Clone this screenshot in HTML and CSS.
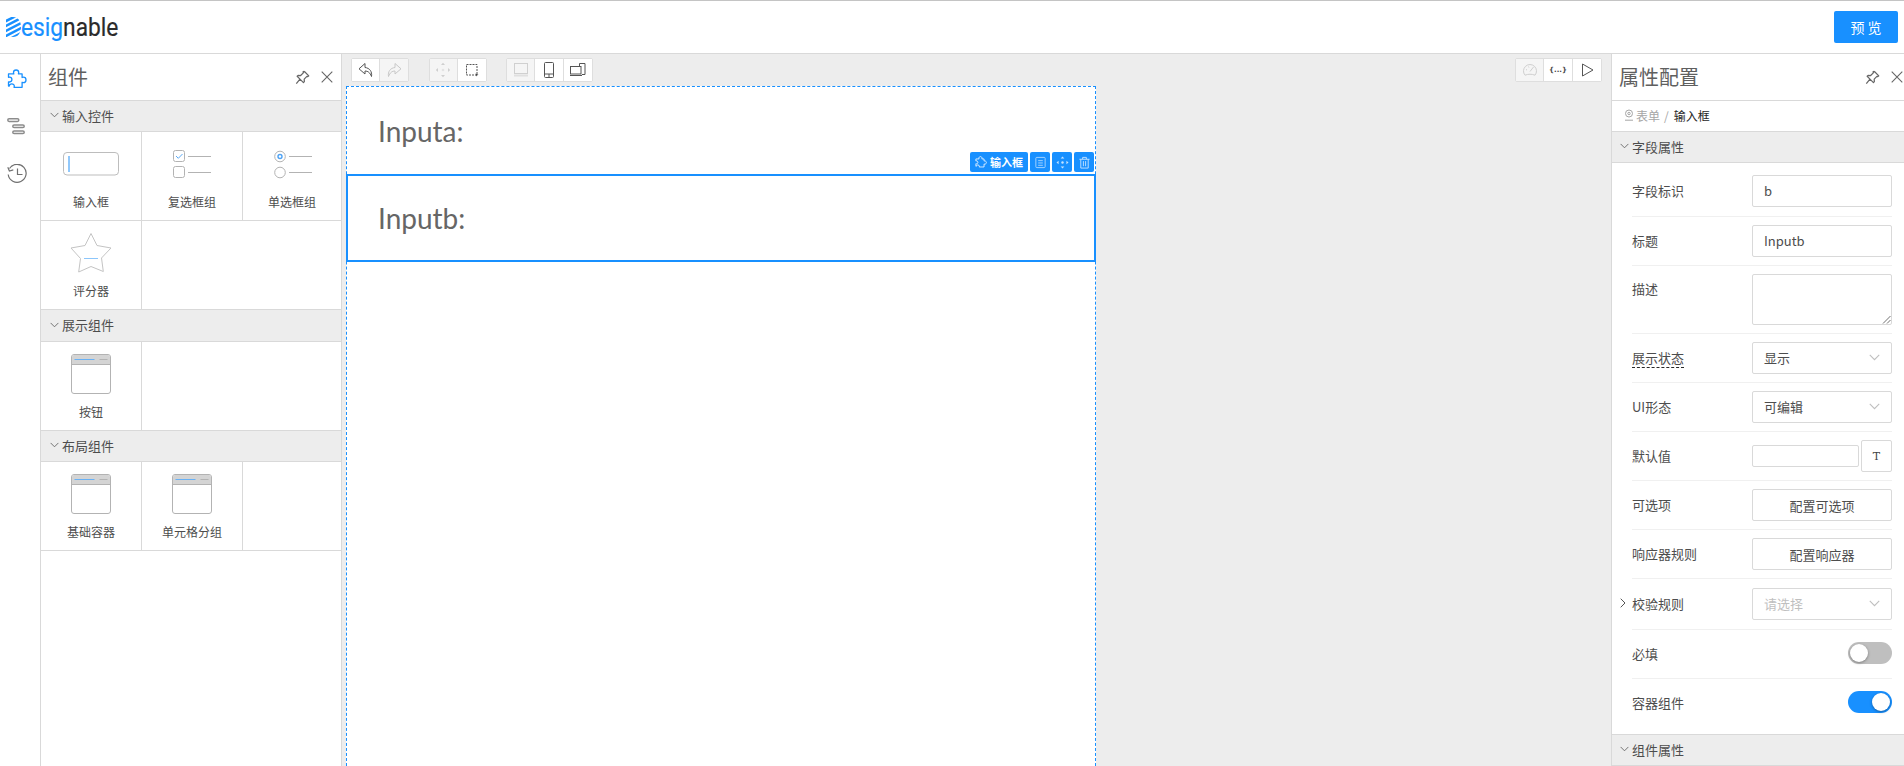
FILE: index.html
```html
<!DOCTYPE html>
<html lang="zh-CN">
<head>
<meta charset="utf-8">
<title>Designable</title>
<link rel="stylesheet" href="styles.css">
</head>
<body>
<svg class="sprite" xmlns="http://www.w3.org/2000/svg">
  <symbol id="puzzle" viewBox="0 0 20 20"><path d="M6.500 3.600c0-1.600 1.200-2.600 2.600-2.600s2.600 1 2.600 2.600c0 .5-.1.9-.3 1.300h3.700v3.600c.4-.2.8-.3 1.200-.3 1.500 0 2.700 1.200 2.700 2.700s-1.200 2.700-2.700 2.700c-.4 0-.8-.1-1.200-.3v5H7c.2-.4.3-.8.3-1.200 0-1.300-1.100-2.200-2.500-2.200s-2.500.9-2.500 2.200H1.500V12.800c.4.2.6.2 1 .2 1.300 0 2.400-1 2.400-2.400S3.800 8.200 2.500 8.200c-.4 0-.7.1-1 .2V4.900h5.300c-.2-.4-.3-.8-.3-1.300z" fill="none" stroke="currentColor" stroke-width="1.300" stroke-linejoin="round"/></symbol>
  <symbol id="pin" viewBox="0 0 16 16"><path d="M9.800 1.300l4.900 4.900-1 .9-1-.3-2.900 2.900.2 2.700-1 1L5.300 9.700 1.400 14.600M5.300 9.700 2.300 6.700l1-1 2.700.2 2.900-2.900-.3-1 1.200-.7" fill="none" stroke="currentColor" stroke-width="1.300" stroke-linejoin="round"/></symbol>
  <symbol id="close" viewBox="0 0 12 12"><path d="M.7.700l10.600 10.600M11.300.700.700 11.300" fill="none" stroke="currentColor" stroke-width="1.100"/></symbol>
  <symbol id="chev" viewBox="0 0 10 6"><path d="M.7.700 5 5l4.300-4.300" fill="none" stroke="currentColor" stroke-width="1"/></symbol>
  <symbol id="window" viewBox="0 0 40 40">
    <rect x=".5" y=".5" width="39" height="39" rx="2.500" fill="#fff" stroke="#b3b3b3"/>
    <path d="M1 3a2 2 0 0 1 2-2h34a2 2 0 0 1 2 2v7.500H1z" fill="#d4d4d4"/>
    <path d="M.5 10.500h39" stroke="#b3b3b3"/>
    <path d="M3.500 5.500h20" stroke="#69b1f5"/>
    <path d="M28.500 5.500h8" stroke="#b3b3b3"/>
  </symbol>
</svg>
<header class="topbar">
  <div class="logo">
    <svg class="logo-mark" viewBox="0 0 15 20" width="15" height="20"><defs><clipPath id="dclip"><path d="M0 0h7c5 0 8 4 8 10s-3 10-8 10H0z"/></clipPath></defs><g clip-path="url(#dclip)" fill="none" stroke="#1890ff" stroke-width="2.500"><path d="M-2 5 12-2M-2 10 17 0M-2 15 17 5M-2 20 17 10M2 23 17 15"/></g></svg>
    <span class="logo-word"><span class="logo-blue">esig</span><span class="logo-dark">nable</span></span>
  </div>
  <button class="primary">预 览</button>
</header>
<main class="workspace">
  <nav class="rail">
    <svg class="rail-icon active" width="20" height="20"><use href="#puzzle"/></svg>
    <svg class="rail-icon" viewBox="0 0 18 17" width="18" height="17"><g fill="none" stroke="#8c8c8c" stroke-width="1.500"><rect x=".8" y=".8" width="11" height="2.600" rx="1.300"/><rect x="5.800" y="7" width="11.400" height="2.600" rx="1.300"/><rect x="5.800" y="13" width="11.400" height="2.600" rx="1.300"/></g></svg>
    <svg class="rail-icon" viewBox="0 0 20 20" width="20" height="20"><g fill="none" stroke="#707070" stroke-width="1.200"><path d="M2.500 4.500A9 9 0 1 1 1.200 10.500"/><path d="M.8 3.200 2.400 7l3.900-1.100"/><path d="M10.500 4.500v6h5"/></g></svg>
  </nav>

  <aside class="panel left">
    <div class="panel-head"><span class="panel-title">组件</span><span class="head-tools"><svg class="i-pin"><use href="#pin"/></svg><svg class="i-close"><use href="#close"/></svg></span></div>

    <div class="sec-head"><svg class="chev"><use href="#chev"/></svg>输入控件</div>
    <div class="cells">
      <div class="cell"><svg class="cell-icon" viewBox="0 0 60 40"><rect x="2.500" y="8.500" width="55" height="22.500" rx="3.500" fill="#fff" stroke="#bdbdbd"/><path d="M8 12v16" stroke="#91c8fb" stroke-width="2"/></svg><span>输入框</span></div>
      <div class="cell"><svg class="cell-icon" viewBox="0 0 60 40"><g fill="none" stroke="#b3b3b3"><rect x="11.500" y="6.500" width="11" height="11" rx="2"/><rect x="11.500" y="22.500" width="11" height="11" rx="2"/><path d="M26 12.500h23M26 28.500h23"/></g><path d="M14 12l2.300 2.300L20.500 10" fill="none" stroke="#5aa9f5"/></svg><span>复选框组</span></div>
      <div class="cell"><svg class="cell-icon" viewBox="0 0 60 40"><g fill="none" stroke="#b3b3b3"><circle cx="18" cy="12.500" r="5.300"/><circle cx="18" cy="28.500" r="5.300"/><path d="M27 12.500h23M27 28.500h23"/></g><circle cx="18" cy="12.500" r="2" fill="none" stroke="#4ea3f5" stroke-width="1.400"/></svg><span>单选框组</span></div>
      <div class="cell"><svg class="cell-icon star" viewBox="0 0 60 40"><path d="M30 .5 36 12.500l14 2.500-9.500 10 1.800 13.500L30 33.500l-12.300 5.500 1.800-13.500L10 15l14-2.500z" fill="#fff" stroke="#c4c4c4" stroke-linejoin="round"/><path d="M23 25.500h14" stroke="#8cc6fb"/></svg><span>评分器</span></div>
      <div class="cell"></div>
      <div class="cell"></div>
    </div>

    <div class="sec-head tall"><svg class="chev"><use href="#chev"/></svg>展示组件</div>
    <div class="cells">
      <div class="cell"><svg class="cell-icon" viewBox="-10 0 60 40"><use href="#window" width="40" height="40"/></svg><span>按钮</span></div>
      <div class="cell"></div>
      <div class="cell"></div>
    </div>

    <div class="sec-head"><svg class="chev"><use href="#chev"/></svg>布局组件</div>
    <div class="cells">
      <div class="cell"><svg class="cell-icon" viewBox="-10 0 60 40"><use href="#window" width="40" height="40"/></svg><span>基础容器</span></div>
      <div class="cell"><svg class="cell-icon" viewBox="-10 0 60 40"><use href="#window" width="40" height="40"/></svg><span>单元格分组</span></div>
      <div class="cell"></div>
    </div>
  </aside>

  <section class="canvas">
    <div class="toolbar">
      <div class="tool-groups">
        <div class="btn-group">
          <button class="tool"><svg viewBox="0 0 16 16" width="16" height="16"><path d="M7 1.500 1 6.800l6 5.200V9c3 .1 5 1.500 6.500 5.500.8-4.800-1.800-8.500-6.500-9z" fill="none" stroke="#555" stroke-linejoin="round"/></svg></button>
          <button class="tool off"><svg viewBox="0 0 16 16" width="16" height="16"><path d="M9 1.500l6 5.300-6 5.200V9c-3 .1-5 1.500-6.500 5.500C1.700 9.700 4.300 6 9 5.500z" fill="none" stroke="#c8c8c8" stroke-linejoin="round"/></svg></button>
        </div>
        <div class="btn-group">
          <button class="tool off"><svg viewBox="0 0 16 16" width="16" height="16"><g fill="#cfcfcf"><path d="M8 .8 10 3H6zM8 15.200 6 13h4zM.8 8 3 6v4zM15.200 8 13 10V6z"/></g><circle cx="8" cy="8" r="1.300" fill="#e3e3e3"/></svg></button>
          <button class="tool"><svg viewBox="0 0 14 14" width="14" height="14"><rect x="1.500" y="1.500" width="10.500" height="10.500" fill="none" stroke="#555" stroke-dasharray="2 1"/><path d="M10.500 10.500l3 1.200-1.200.6-.6 1.200z" fill="#444"/></svg></button>
        </div>
        <div class="btn-group">
          <button class="tool off"><svg viewBox="0 0 16 16" width="16" height="16"><rect x="1.500" y="1.500" width="13" height="10" fill="none" stroke="#d0d0d0"/><rect x="1" y="12.500" width="14" height="2" fill="#e0e0e0"/></svg></button>
          <button class="tool"><svg viewBox="0 0 16 16" width="16" height="16"><g fill="none" stroke="#555"><rect x="3.500" y=".5" width="9" height="15" rx="1"/><path d="M3.500 12h9M8 12v3.500"/></g></svg></button>
          <button class="tool"><svg viewBox="0 0 16 16" width="16" height="16"><g fill="none" stroke="#555"><path d="M9.500 4V1.500h5.500v11h-3"/><rect x=".5" y="4.500" width="10.500" height="7.500"/><path d="M0 13.500h12"/></g></svg></button>
        </div>
      </div>
      <div class="btn-group">
        <button class="tool off"><svg viewBox="0 0 16 16" width="16" height="16"><g fill="none" stroke="#cfcfcf"><path d="M3 13.200a6.500 6.500 0 1 1 10 0c-3-1.300-7-1.300-10 0z"/><path d="M8 9.500l3.500-4.500M4 7.500l1 .5M6.500 4.500l.4 1"/></g></svg></button>
        <button class="tool code">{...}</button>
        <button class="tool"><svg viewBox="0 0 16 16" width="16" height="16"><path d="M3.500 2v12l10.500-6z" fill="none" stroke="#555" stroke-linejoin="round"/></svg></button>
      </div>
    </div>
    <div class="form-sheet">
      <div class="field-item first">Inputa:</div>
      <div class="field-item selected">Inputb:
        <div class="field-actions">
          <span class="action wide"><svg width="12" height="12"><use href="#puzzle"/></svg>输入框</span>
          <span class="action"><svg viewBox="0 0 14 14" width="13" height="13"><g fill="none" stroke="#a9d5ff"><rect x="2" y="1.500" width="10" height="11" rx="1"/><path d="M4.500 5h5M4.500 7.500h5M4.500 10h5"/></g></svg></span>
          <span class="action"><svg viewBox="0 0 14 14" width="13" height="13"><g fill="#c6e3ff"><path d="M7 .5 9 2.800H5zM7 13.500 5 11.200h4zM.5 7 2.800 5v4zM13.500 7 11.200 9V5z"/><circle cx="7" cy="7" r="1.300"/></g></svg></span>
          <span class="action"><svg viewBox="0 0 14 14" width="13" height="13"><g fill="none" stroke="#c6e3ff"><path d="M1.500 3.500h11M5 3.500V1.500h4v2M3 3.500v9.500h8V3.500M5.800 5.500V11M8.200 5.500V11"/></g></svg></span>
        </div>
      </div>
    </div>
  </section>

  <aside class="panel right">
    <div class="panel-head"><span class="panel-title">属性配置</span><span class="head-tools"><svg class="i-pin"><use href="#pin"/></svg><svg class="i-close"><use href="#close"/></svg></span></div>
    <div class="crumb"><svg viewBox="0 0 10 12" width="10" height="12"><g fill="none" stroke="#a6a6a6"><circle cx="5" cy="4.500" r="3.500"/><circle cx="5" cy="4.500" r="1.200"/><path d="M1 11.200h8"/></g></svg><span class="crumb-dim">表单</span><span class="crumb-sep">/</span><span>输入框</span></div>
    <div class="sec-head prop"><svg class="chev"><use href="#chev"/></svg>字段属性</div>
    <div class="props">
      <div class="prop-row lead"><label>字段标识</label><div class="input">b</div></div>
      <div class="prop-row"><label>标题</label><div class="input">Inputb</div></div>
      <div class="prop-row top"><label>描述</label><div class="input area"><svg viewBox="0 0 9 9" width="9" height="9"><path d="M8.500 1 1 8.500M8.500 5 5 8.500" stroke="#707070" fill="none"/></svg></div></div>
      <div class="prop-row"><label class="tip">展示状态</label><div class="input select">显示<svg class="sel-chev"><use href="#chev"/></svg></div></div>
      <div class="prop-row"><label>UI形态</label><div class="input select">可编辑<svg class="sel-chev"><use href="#chev"/></svg></div></div>
      <div class="prop-row"><label>默认值</label><div class="poly"><div class="input mini"></div><button class="btn-t">T</button></div></div>
      <div class="prop-row"><label>可选项</label><button class="btn">配置可选项</button></div>
      <div class="prop-row"><label>响应器规则</label><button class="btn">配置响应器</button></div>
      <div class="prop-row rules"><svg class="expand"><use href="#chev"/></svg><label>校验规则</label><div class="input select placeholder">请选择<svg class="sel-chev"><use href="#chev"/></svg></div></div>
      <div class="prop-row"><label>必填</label><span class="switch"></span></div>
      <div class="prop-row last"><label>容器组件</label><span class="switch on"></span></div>
    </div>
    <div class="sec-head prop bottom"><svg class="chev"><use href="#chev"/></svg>组件属性</div>
  </aside>
</main>
</body>
</html>
```
FILE: styles.css
```css
* { box-sizing: border-box; }
html, body { margin: 0; height: 100%; overflow: hidden; }
body { font-family: "Noto Sans CJK SC", sans-serif; font-size: 13px; color: #4d4d4d; background: #fff; height: 766px; display: flex; flex-direction: column; }
button { font-family: inherit; }
.sprite { display: none; }

.topbar { height: 54px; flex: none; border-top: 1px solid #c4c4c4; border-bottom: 1px solid #d9d9d9; display: flex; align-items: center; justify-content: space-between; padding: 0 6px; }
.logo { display: flex; align-items: center; width: 112px; }
.logo-mark { flex: none; margin-right: 0; }
.logo-word { font-family: Roboto, sans-serif; font-size: 26px; line-height: 30px; transform: scaleX(.875); transform-origin: left center; white-space: nowrap; -webkit-text-stroke: .2px currentColor; }
.logo-blue { color: #1890ff; }
.logo-dark { color: #2b2b2b; }
.primary { width: 64px; height: 32px; border: 0; border-radius: 2px; background: #1890ff; color: #fff; font-size: 14px; padding: 0; }

.workspace { flex: 1; min-height: 0; display: flex; }
.rail { width: 41px; flex: none; border-right: 1px solid #d9d9d9; display: flex; flex-direction: column; align-items: flex-start; padding: 15px 0 0 7px; gap: 29px; }
.rail-icon { color: #8c8c8c; display: block; }
.rail-icon.active { color: #1890ff; }

.panel { flex: none; background: #fff; display: flex; flex-direction: column; overflow: hidden; }
.panel.left { width: 301px; border-right: 1px solid #d9d9d9; }
.panel.right { width: 293px; border-left: 1px solid #d9d9d9; }
.panel-head { height: 47px; flex: none; border-bottom: 1px solid #d9d9d9; display: flex; align-items: center; justify-content: space-between; padding: 0 8px 0 7px; }
.right .panel-head { padding-right: 1px; }
.panel-title { font-size: 20px; color: #5f5f5f; line-height: 28px; }
.head-tools { display: flex; align-items: center; gap: 11px; color: #666; }
.i-pin { width: 15px; height: 15px; }
.i-close { width: 12px; height: 12px; }

.sec-head { height: 31px; flex: none; background: #ededed; border-bottom: 1px solid #d9d9d9; display: flex; align-items: center; padding: 0 0 2px 9px; color: #4d4d4d; }
.sec-head.tall { height: 32px; }
.chev { width: 9px; height: 6px; margin-right: 3px; color: #666; flex: none; }

.cells { display: grid; grid-template-columns: 101px 101px 1fr; }
.cell { height: 89px; border-bottom: 1px solid #d9d9d9; border-right: 1px solid #d9d9d9; display: flex; flex-direction: column; align-items: center; padding-top: 12px; font-size: 12px; color: #4d4d4d; }
.cell:nth-child(3n), .cell:empty { border-right: 0; }
.cell-icon { width: 60px; height: 40px; display: block; flex: none; overflow: visible; }
.cell span { margin-top: 9px; line-height: 18px; }

.canvas { flex: 1; min-width: 0; background: #ededed; display: flex; flex-direction: column; padding-left: 4px; }
.toolbar { display: flex; justify-content: space-between; padding: 4px 9px 0 5px; height: 32px; flex: none; }
.tool-groups { display: flex; gap: 19.5px; }
.btn-group { display: flex; height: 24px; border: 1px solid #dedede; border-radius: 2px; background: #fff; }
.tool { width: 29px; height: 22px; border: 0; border-left: 1px solid #dedede; background: #fff; padding: 0; display: flex; align-items: center; justify-content: center; }
.tool:first-child { border-left: 0; width: 27px; }
.tool.off { background: #f5f5f5; }
.tool.code { font-family: "DejaVu Sans", sans-serif; font-size: 7px; font-weight: 700; color: #444; }

.form-sheet { width: 750px; flex: 1; background: #fff; border: 1px dashed #1890ff; border-bottom: 0; }
.field-item { padding-left: 31px; font-family: Lato, sans-serif; font-size: 28px; color: #666; display: flex; align-items: center; position: relative; }
.field-item.first { height: 87px; }
.field-item.selected { height: 88px; margin: 0 -1px; padding-left: 30px; border: 2px solid #1890ff; }
.field-actions { position: absolute; right: 0; top: -24px; display: flex; gap: 2px; }
.action { width: 20px; height: 20px; background: #1890ff; border-radius: 2px; display: flex; align-items: center; justify-content: center; color: #fff; }
.action.wide { width: 58px; font-family: "Noto Sans CJK SC", sans-serif; font-size: 11px; font-weight: 700; gap: 3px; }

.crumb { height: 31px; flex: none; border-bottom: 1px solid #d9d9d9; display: flex; align-items: center; padding: 0 0 2px 12px; font-size: 12px; color: #262626; }
.crumb-dim { margin-left: 2px; color: #a6a6a6; }
.crumb-sep { margin: 0 5px 0 4px; color: #a6a6a6; }
.sec-head.prop { padding-left: 8px; }
.props { flex: 1; min-height: 0; padding: 4px 12px 0 20px; }
.prop-row { display: flex; align-items: center; justify-content: space-between; padding: 8px 0; border-bottom: 1px solid #f0f0f0; position: relative; color: #4d4d4d; }
.prop-row.lead { padding-bottom: 9px; }
.prop-row.top { align-items: flex-start; }
.prop-row.rules { padding: 9px 0; }
.prop-row.last { border-bottom: 0; }
.prop-row label { line-height: 20px; }
.prop-row.top label { margin-top: 5px; }
.tip { border-bottom: 1px dashed #262626; line-height: 18px !important; }
.input { width: 140px; height: 32px; border: 1px solid #d9d9d9; border-radius: 2px; background: #fff; padding: 0 11px; line-height: 30px; color: #4d4d4d; position: relative; }
.input.area { height: 51px; }
.input.area svg { position: absolute; right: 0; bottom: 0; }
.select .sel-chev { position: absolute; right: 11px; top: 11px; width: 11px; height: 7px; color: #bfbfbf; }
.placeholder { color: #bfbfbf; }
.poly { display: flex; align-items: center; width: 140px; justify-content: space-between; }
.input.mini { width: 107px; height: 22px; }
.btn-t { width: 31px; height: 32px; padding: 0; border: 1px solid #d9d9d9; border-radius: 2px; background: #fff; font-family: "DejaVu Serif", serif; font-size: 11px; color: #444; }
.btn { width: 140px; height: 32px; border: 1px solid #d9d9d9; border-radius: 2px; background: #fff; font-size: 13px; color: #4d4d4d; padding: 0; }
.expand { position: absolute; left: -14px; top: 21px; width: 10px; height: 6px; transform: rotate(-90deg); color: #555; }
.switch { width: 44px; height: 22px; border-radius: 11px; background: #bfbfbf; position: relative; margin: 4px 0 6px; display: block; }
.switch::after { content: ""; position: absolute; left: 2px; top: 2px; width: 18px; height: 18px; border-radius: 50%; background: #fff; box-shadow: 0 1px 3px rgba(0,0,0,.35); }
.switch.on { background: #1890ff; }
.switch.on::after { left: 24px; }
.sec-head.bottom { height: 32px; border-top: 1px solid #d9d9d9; }
```
